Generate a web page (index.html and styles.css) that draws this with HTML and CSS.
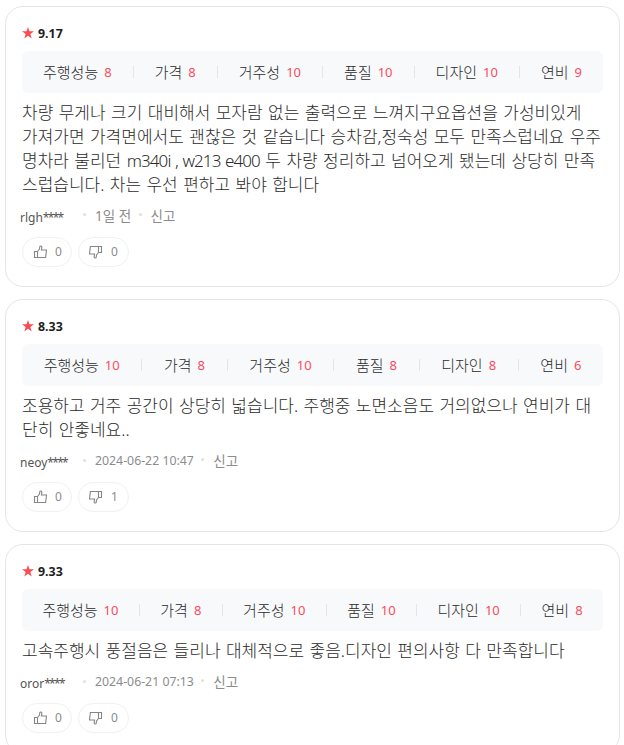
FILE: index.html
```html
<!DOCTYPE html>
<html lang="ko">
<head>
  <meta charset="UTF-8" />
  <title>오너 평가</title>
  <link rel="stylesheet" href="styles.css">
</head>
<body>

  <svg class="defs" width="0" height="0">
    <symbol id="star" viewBox="0 0 12 12">
      <path d="M6 0l1.45 4.3H12L8.35 7 9.7 11.5 6 8.8l-3.7 2.7L3.65 7 0 4.3h4.55z" fill="#f84c52"/>
    </symbol>
    <symbol id="thumb" viewBox="0 0 14 14">
      <path d="M1.5 6.5h3v6h-3zM4.5 6.5L6.5 4l.3-2.4c.1-.9 1.8-.9 2 .2.2 1-.2 1.9-.4 3.2h5.1l-.9 7.5H4.5" fill="none" stroke="#868686" stroke-width="1.1"/>
    </symbol>
  </svg>

  <ul class="review-list">
    <li class="review">
      <div class="score"><svg class="star"><use href="#star"/></svg><strong>9.17</strong></div>
      <ul class="stats">
        <li>주행성능<em>8</em></li>
        <li>가격<em>8</em></li>
        <li>거주성<em>10</em></li>
        <li>품질<em>10</em></li>
        <li>디자인<em>10</em></li>
        <li>연비<em>9</em></li>
      </ul>
      <p class="text">차량 무게나 크기 대비해서 모자람 없는 출력으로 느껴지구요옵션을 가성비있게<br>가져가면 가격면에서도 괜찮은 것 같습니다 승차감,정숙성 모두 만족스럽네요 우주<br>명차라 불리던 <span class="latin">m340i , w213 e400</span> 두 차량 정리하고 넘어오게 됐는데 상당히 만족<br>스럽습니다. 차는 우선 편하고 봐야 합니다</p>
      <div class="meta">
        <span class="name">rlgh<i>****</i></span>
        <span class="date ago">1일 전</span>
        <a class="report">신고</a>
      </div>
      <div class="votes">
        <button type="button"><svg><use href="#thumb"/></svg>0</button>
        <button type="button" class="down"><svg><use href="#thumb"/></svg>0</button>
      </div>
    </li>

    <li class="review">
      <div class="score"><svg class="star"><use href="#star"/></svg><strong>8.33</strong></div>
      <ul class="stats">
        <li>주행성능<em>10</em></li>
        <li>가격<em>8</em></li>
        <li>거주성<em>10</em></li>
        <li>품질<em>8</em></li>
        <li>디자인<em>8</em></li>
        <li>연비<em>6</em></li>
      </ul>
      <p class="text">조용하고 거주 공간이 상당히 넓습니다. 주행중 노면소음도 거의없으나 연비가 대<br>단히 안좋네요..</p>
      <div class="meta">
        <span class="name">neoy<i>****</i></span>
        <span class="date">2024-06-22 10:47</span>
        <a class="report">신고</a>
      </div>
      <div class="votes">
        <button type="button"><svg><use href="#thumb"/></svg>0</button>
        <button type="button" class="down"><svg><use href="#thumb"/></svg>1</button>
      </div>
    </li>

    <li class="review">
      <div class="score"><svg class="star"><use href="#star"/></svg><strong>9.33</strong></div>
      <ul class="stats">
        <li>주행성능<em>10</em></li>
        <li>가격<em>8</em></li>
        <li>거주성<em>10</em></li>
        <li>품질<em>10</em></li>
        <li>디자인<em>10</em></li>
        <li>연비<em>8</em></li>
      </ul>
      <p class="text">고속주행시 풍절음은 들리나 대체적으로 좋음.디자인 편의사항 다 만족합니다</p>
      <div class="meta">
        <span class="name">oror<i>****</i></span>
        <span class="date">2024-06-21 07:13</span>
        <a class="report">신고</a>
      </div>
      <div class="votes">
        <button type="button"><svg><use href="#thumb"/></svg>0</button>
        <button type="button" class="down"><svg><use href="#thumb"/></svg>0</button>
      </div>
    </li>
  </ul>

</body>
</html>
```

FILE: styles.css
```css
* {
  box-sizing: border-box;
}

body {
  margin: 0;
  height: 745px;
  overflow: hidden;
  background: #fff;
  color: #2b2b2b;
  font-family: "Noto Sans", "Noto Sans CJK KR", sans-serif;
}

ul,
p {
  margin: 0;
  padding: 0;
  list-style: none;
}

.defs {
  position: absolute;
}

.review-list {
  width: 615px;
  padding-top: 6px;
  margin-left: 5px;
}

.review {
  padding: 16px 16px 19px;
  margin-bottom: 12px;
  border: 1px solid #e5e5e5;
  border-radius: 18px;
}

.score {
  display: flex;
  align-items: center;
  height: 20px;
  margin-bottom: 8px;
  font-size: 12.4px;
}

.score strong {
  font-weight: 700;
  color: #1e1e1e;
}

.star {
  width: 12px;
  height: 12px;
  margin-right: 4px;
}

.stats {
  display: flex;
  height: 42px;
  align-items: center;
  border-radius: 6px;
  background: #f8f9fb;
  font-size: 15px;
  font-weight: 300;
}

.stats li {
  display: flex;
  flex: 1 1 auto;
  height: 12px;
  align-items: center;
  justify-content: center;
  padding-bottom: 1px;
  line-height: 20px;
  white-space: nowrap;
}

.stats li + li {
  border-left: 1px solid #e4e5e7;
}

.stats em {
  margin: 1px 0 0 6px;
  font-size: 13px;
  font-style: normal;
  font-weight: 400;
  color: #f84c5c;
}

.text {
  margin-top: 8px;
  font-size: 17px;
  font-weight: 300;
  line-height: 24px;
  word-spacing: 1px;
  white-space: nowrap;
}

.latin {
  letter-spacing: -0.9px;
}

.meta {
  display: flex;
  align-items: center;
  height: 36px;
  margin: 0 0 4px -2px;
  font-size: 12.3px;
  color: #8c8c8c;
}

.name {
  width: 63px;
  margin-top: 4px;
  font-size: 12px;
  color: #555;
}

.name i {
  font-style: normal;
  letter-spacing: -1.7px;
}

.date,
.report {
  display: flex;
  align-items: center;
}

.date::before,
.report::before {
  content: "";
  width: 3px;
  height: 3px;
  margin-right: 9px;
  border-radius: 50%;
  background: #e0e0e0;
}

.report {
  padding-bottom: 1px;
  margin-left: 7.5px;
  font-size: 13.5px;
}

.ago {
  padding-bottom: 1px;
  font-size: 13.5px;
}

.votes {
  display: flex;
  gap: 6px;
}

.votes button {
  display: flex;
  align-items: center;
  width: 50px;
  height: 30px;
  padding: 0 0 1px 10px;
  border: 1px solid #f1f1f1;
  border-radius: 15px;
  background: #fff;
  font-family: inherit;
  font-size: 12px;
  color: #8c8c8c;
}

.votes svg {
  width: 14px;
  height: 14px;
  margin-right: 8px;
}

.votes .down {
  width: 51px;
}

.down svg {
  transform: rotate(180deg);
}
```
